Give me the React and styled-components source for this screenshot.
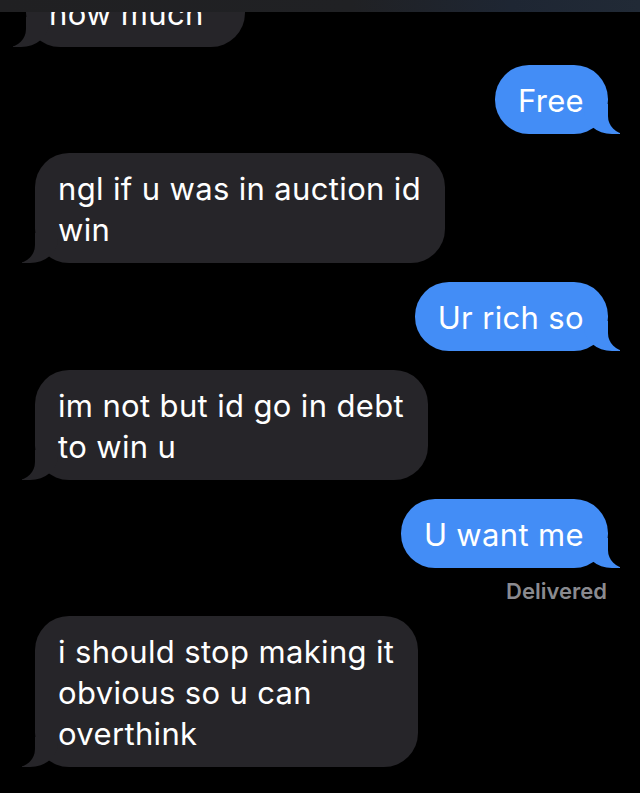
import React from 'react';
import styled, { createGlobalStyle, css } from 'styled-components';

const GRAY = '#262529';
const BLUE = '#438df6';
const BG = '#000';

const Global = createGlobalStyle`
  html, body {
    margin: 0;
    padding: 0;
    background: ${BG};
  }
`;

const Screen = styled.div`
  width: 640px;
  height: 793px;
  overflow: hidden;
  background: ${BG};
  display: flex;
  flex-direction: column;
  font-family: Inter, 'Liberation Sans', sans-serif;
`;

const TopBar = styled.div`
  height: 12px;
  flex: none;
  position: relative;
  z-index: 2;
  background: linear-gradient(90deg, #202022 0%, #202124 55%, #1e2633 80%, #212a36 100%);
`;

const Thread = styled.div`
  flex: 1;
  overflow: hidden;
  display: flex;
  flex-direction: column;
  padding: 0 32px 0 35px;
`;

const tailLeft = css`
  &::before {
    content: '';
    position: absolute;
    bottom: 0;
    left: -13px;
    width: 36px;
    height: 30px;
    background: ${GRAY};
    border-bottom-right-radius: 28px 24px;
  }
  &::after {
    content: '';
    position: absolute;
    bottom: 0;
    left: -47px;
    width: 47px;
    height: 30px;
    background: ${BG};
    border-bottom-right-radius: 18px;
  }
`;

const tailRight = css`
  &::before {
    content: '';
    position: absolute;
    bottom: 0;
    right: -12px;
    width: 36px;
    height: 30px;
    background: ${BLUE};
    border-bottom-left-radius: 28px 24px;
  }
  &::after {
    content: '';
    position: absolute;
    bottom: 0;
    right: -47px;
    width: 47px;
    height: 30px;
    background: ${BG};
    border-bottom-left-radius: 18px;
  }
`;

const Bubble = styled.div`
  position: relative;
  align-self: ${(p) => (p.$sent ? 'flex-end' : 'flex-start')};
  background: ${(p) => (p.$sent ? BLUE : GRAY)};
  color: #fff;
  font-size: 31px;
  line-height: 41px;
  letter-spacing: 0.35px;
  padding: 15px 24px 13px 23px;
  border-radius: 34px;
  white-space: nowrap;
  margin-top: ${(p) => p.$gap ?? 19}px;
  ${(p) => p.$width && `width: ${p.$width}px; box-sizing: border-box;`}
  ${(p) => (p.$sent ? tailRight : tailLeft)}
`;

const Status = styled.div`
  align-self: flex-end;
  margin-top: 10px;
  margin-right: 1px;
  color: #8a8a8f;
  font-size: 22px;
  font-weight: 600;
  line-height: 26px;
`;

export default function App() {
  return (
    <>
      <Global />
      <Screen>
        <TopBar />
        <Thread>
          <Bubble $gap={-34} $width={219} style={{ marginLeft: -9 }}>
            how much
          </Bubble>
          <Bubble $sent $gap={18}>Free</Bubble>
          <Bubble>
            ngl if u was in auction id
            <br />
            win
          </Bubble>
          <Bubble $sent>Ur rich so</Bubble>
          <Bubble>
            im not but id go in debt
            <br />
            to win u
          </Bubble>
          <Bubble $sent>U want me</Bubble>
          <Status>Delivered</Status>
          <Bubble $gap={12}>
            i should stop making it
            <br />
            obvious so u can
            <br />
            overthink
          </Bubble>
        </Thread>
      </Screen>
    </>
  );
}
